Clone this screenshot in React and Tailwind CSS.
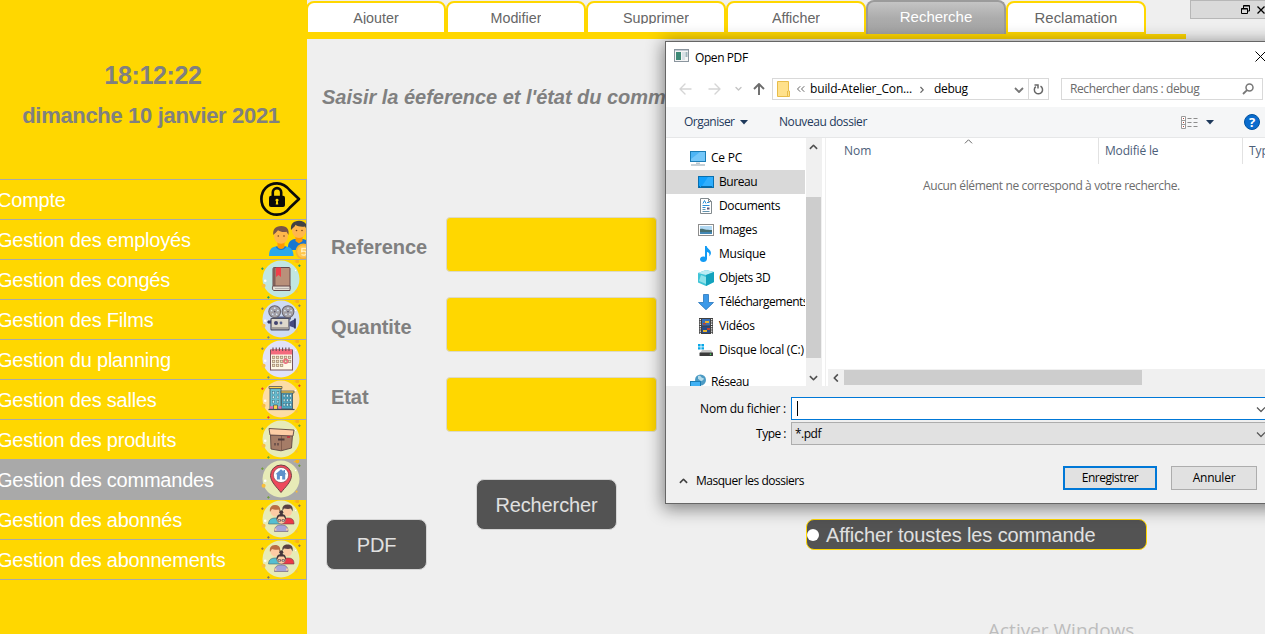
import React from "react";

const line = { fill: "none", strokeLinecap: "round", strokeLinejoin: "round" };

/* ---------- sidebar badges (46x40 canvas, disc centred on 20,20) ---------- */

function Plus({ x, y, c }) {
  return <path d={`M${x - 1.3} ${y}h2.6M${x} ${y - 1.3}v2.6`} stroke={c} strokeWidth="0.9" fill="none" />;
}

function Badge({ disc, spark = "#7c7a78", spark2, children }) {
  return (
    <svg className="-mt-px block h-10 w-[46px] shrink-0 overflow-visible" viewBox="0 0 46 40">
      <circle cx="20" cy="20" r="18.5" fill={disc} />
      <circle cx="36.3" cy="2.2" r="2" fill="#f6b21b" />
      <circle cx="2.6" cy="26.7" r="2" fill="#f9bf3b" />
      <circle cx="35.6" cy="32.6" r="1.1" fill="#f6b93b" />
      <circle cx="33.5" cy="2.7" r="0.8" fill="#f6b93b" />
      <circle cx="4.2" cy="21.7" r="1.3" fill="#fff" />
      <circle cx="34.6" cy="11.5" r="0.7" fill="#fff" />
      <Plus x={1.4} y={9.7} c={spark2 || spark} />
      <Plus x={38.4} y={6.7} c={spark} />
      <Plus x={7.4} y={38.4} c={spark2 || spark} />
      {children}
    </svg>
  );
}

function LockIcon() {
  return (
    <svg className="-mt-px block h-10 w-[46px] shrink-0 overflow-visible" viewBox="0 0 46 40">
      <path d="M16 4.3C6.800 4.300 0.400 11.400 0.400 20S6.800 35.700 16 35.700c5.500 0 9.500-2.600 13-7.200L38 20l-9-8.500C25.500 6.900 21.500 4.300 16 4.300Z" fill="none" stroke="#0a0a0a" strokeWidth="2.700" strokeLinejoin="round" />
      <path d="M11.800 18v-4.700a4.200 4.200 0 0 1 8.400 0V18" fill="none" stroke="#0a0a0a" strokeWidth="2.600" />
      <rect x="8" y="16.700" width="16" height="11.300" rx="2" fill="#0a0a0a" />
      <path d="M16 19.700a1.500 1.500 0 0 1 .8 2.800l.5 2.900h-2.600l.5-2.900A1.500 1.500 0 0 1 16 19.700Z" fill="#ffd700" />
    </svg>
  );
}

function EmployeesIcon() {
  return (
    <svg className="-mt-px block h-10 w-[46px] shrink-0" viewBox="0 0 46 40">
      <path d="M27 28c0-5 3-7.500 7-8h8c3 .5 5 2 6 5v6H28Z" fill="#1976d2" />
      <path d="M34.500 16h7v6l-3.500 2.500-3.500-2.500Z" fill="#ff9800" />
      <ellipse cx="38" cy="11" rx="7" ry="8" fill="#ffb74d" />
      <path d="M30 11c-.6-5.500 1.700-9 8-9.300 6.200.3 8.500 3.800 8 9.300l-2-3.500c-4 .5-7 0-9.500-1.800C33.800 8 32 8.500 30 11Z" fill="#424242" />
      <circle cx="35.500" cy="11.500" r=".8" fill="#784719" />
      <circle cx="41" cy="11.500" r=".8" fill="#784719" />
      <path d="M8 37c0-6 2-8.500 6.500-9.500h11c4.500 1 7 3.500 7 9.500Z" fill="#29a8ec" />
      <path d="M15.500 27.500c1.500 3.500 7.500 3.500 9 0" stroke="#1976d2" strokeWidth="1.700" fill="none" />
      <path d="M16.500 22h7v6c-1.500 2.500-5.500 2.500-7 0Z" fill="#ff9800" />
      <ellipse cx="20" cy="16.800" rx="7" ry="8" fill="#ffb74d" />
      <path d="M12.300 16c-.6-5.500 1.700-9 8-9 6.200 0 8 4 7.200 9l-2-3.200c-4 .5-6 0-8.500-1.600-1.400 2-3 2.800-4.700 4.800Z" fill="#795548" />
      <circle cx="17.300" cy="17" r=".8" fill="#784719" />
      <circle cx="23" cy="17" r=".8" fill="#784719" />
      <circle cx="42.500" cy="32.500" r="8" fill="#f9b42c" />
      <circle cx="42.500" cy="32.500" r="6.300" fill="#ffc64d" />
      <path d="M45 29.500h-4l-.3 3c3-1 5 0 4.600 2-.3 1.700-2.800 2.200-4.800 1" stroke="#fff0bd" strokeWidth="1.400" fill="none" />
    </svg>
  );
}

function BookIcon() {
  return (
    <Badge disc="#c1e6e2" spark="#21936e">
      <path d="M13 8.500h15a1 1 0 0 1 1 1V30H12V10a1.500 1.500 0 0 1 1-1.500Z" fill="#b9907a" stroke="#65484b" />
      <path d="M12 9.500c0-.6.400-1 1-1h1.500V27H12Z" fill="#80605a" />
      <path d="M12.500 27H29v4.500H13c-2 0-2-4.500-.5-4.500Z" fill="#e6dfd6" stroke="#65484b" />
      <path d="M14 29.500h14.500" stroke="#a8a29f" strokeWidth=".8" />
      <path d="M15 8.500h5v9.500l-2.500-2-2.500 2Z" fill="#ef3e4a" />
    </Badge>
  );
}

function CameraIcon() {
  return (
    <Badge disc="#cfdcf3">
      <path d="M12 17.500h18v3H12Z" fill="#59638d" />
      {[13.700, 27].map((cx) => (
        <g key={cx}>
          <circle cx={cx} cy="12.600" r="5.900" fill="#aaa6a9" stroke="#696570" strokeWidth="1.100" />
          {[0, 72, 144, 216, 288].map((a) => (
            <circle key={a} cx={cx} cy="9.300" r="1.250" fill="#dce6f5" stroke="#77717b" strokeWidth=".4" transform={`rotate(${a} ${cx} 12.600)`} />
          ))}
          <circle cx={cx} cy="12.600" r=".9" fill="#55546e" />
        </g>
      ))}
      <rect x="10" y="19.500" width="18" height="11.300" rx=".6" fill="#ded8cb" stroke="#4d4d60" strokeWidth="1.200" />
      <rect x="11" y="28" width="16.500" height="2" fill="#a7a19b" />
      <circle cx="15" cy="24" r="2" fill="#43446f" />
      <circle cx="20" cy="24" r="1.400" fill="#59638d" />
      <path d="M28.500 23l5.500-3v9l-5.500-2Z" fill="#454a80" />
      <path d="M34 19.500v10" stroke="#2f355e" strokeWidth="1.700" />
      <path d="M10 22H7v2h3" fill="#454a80" stroke="#2f355e" />
    </Badge>
  );
}

function CalendarIcon() {
  return (
    <Badge disc="#e1e2f8">
      <rect x="9.500" y="11" width="22" height="20" fill="#fff8e7" stroke="#77545c" />
      <rect x="10" y="10.300" width="21" height="5.200" fill="#f46b7d" />
      {[12, 15.200, 18.400, 21.600, 24.800, 28].map((x) => (
        <path key={x} d={`M${x} 8.500v3.500`} stroke="#674952" strokeWidth="1.100" />
      ))}
      {[17.200, 21.200, 25.200].map((y, r) =>
        [12, 16, 20, 24, 28].slice(0, r === 2 ? 3 : 5).map((x) => (
          <rect key={`${x}-${y}`} x={x - 0.500} y={y} width="2.300" height="2.300" fill="#f3e2b6" stroke="#9b806d" strokeWidth=".7" />
        ))
      )}
      <circle cx="24.700" cy="22.300" r="2.100" fill="none" stroke="#f46b7d" strokeWidth="1.200" />
    </Badge>
  );
}

function BuildingIcon() {
  return (
    <Badge disc="#fcdda5" spark="#e03a3a">
      <rect x="9" y="9" width="11" height="21" fill="#68bdd0" stroke="#455d6b" strokeWidth=".9" />
      <rect x="20.500" y="13.500" width="11" height="16.500" fill="#4ea6c1" stroke="#455d6b" strokeWidth=".9" />
      <path d="M8 7.500h13v2H8ZM20 12h13v2H20Z" fill="#ffd34d" stroke="#52555b" strokeWidth=".8" />
      {[12.500, 17, 21.500].map((y) =>
        [12.200, 16.800, 23, 26.200, 29.400].map((x) => (
          <rect key={`${x}-${y}`} x={x - 0.800} y={y + (x > 20 ? 3 : 0)} width="1.800" height="2.500" fill="#d3f4f6" stroke="#36596c" strokeWidth=".4" />
        ))
      )}
      <path d="M12.500 30v-4h4v4" fill="#ffd34d" stroke="#52555b" strokeWidth=".8" />
      <path d="M9 28.500h3M17.500 28.500h3" stroke="#ed69a3" strokeWidth="2.300" />
      <path d="M7.500 30.500h26" stroke="#464d5a" strokeWidth="1.200" />
    </Badge>
  );
}

function BoxIcon() {
  return (
    <Badge disc="#e7ebb7" spark="#6d9c33">
      <path d="M9.500 16l.5 14 10 1.800 10.500-2.800 1-13Z" fill="#a57c67" stroke="#5d4543" strokeWidth=".9" />
      <path d="M20.500 17v14.500" stroke="#795548" strokeWidth=".8" />
      <path d="M8 9.500l25 1.500-1 6-23-1Z" fill="#fdcda5" stroke="#5d4543" strokeWidth=".9" />
      <path d="M17 20.500h6.500" stroke="#4e3b3c" strokeWidth="2" />
      <path d="M26 18h3" stroke="#bd2f3c" strokeWidth="1.600" />
      <path d="M14 24v2.500M17 24v2.500" stroke="#4e3b3c" strokeWidth="1.200" />
    </Badge>
  );
}

function PinIcon() {
  return (
    <Badge disc="#e7ebb7" spark="#6d9c33">
      <path d="M20 33.500C15.500 28 9.500 22.500 9.500 16.500a10.500 10.500 0 0 1 21 0c0 6-6 11.500-10.500 17Z" fill="#ee4a5c" stroke="#704146" strokeWidth="1" />
      <circle cx="20" cy="16" r="7.600" fill="#fff" stroke="#704146" strokeWidth=".6" />
      <path d="M20 10.300l-5.600 5h1.500v5.200h3v-3.500h2.300v3.500h3v-5.200h1.500l-1.700-1.500V11h-1.500v1.200Z" fill="#5e91cb" />
    </Badge>
  );
}

function PeopleIcon() {
  return (
    <Badge disc="#e7ebb7" spark="#8b6e50">
      <path d="M7.500 25c0-4.500 3-6 7-6s6 1.500 6 6Z" fill="#55bfd1" stroke="#53666c" strokeWidth=".6" />
      <path d="M20 25c0-4.500 3-6 7-6s6 1.500 6 6Z" fill="#eb3947" stroke="#704146" strokeWidth=".6" />
      <circle cx="14" cy="13" r="4.400" fill="#fdcba4" />
      <path d="M9 13c-.8-4 1-7 5-7s6 2.500 5 7l-1.500-2.500c-2.500.5-5 0-6.500-.5Z" fill="#b96e45" />
      <circle cx="26.500" cy="13" r="4.400" fill="#fdcba4" />
      <path d="M21.500 12c-.8-4 1-6.500 5-6.500s6 2.500 5 7l-1.500-3-3 .500-4-.5Z" fill="#584142" />
      <circle cx="20.300" cy="13.200" r="2" fill="#47343a" />
      <path d="M13.500 32.500c0-5 2.500-6.500 6.800-6.500s6.700 1.500 6.700 6.500Z" fill="#a7a4d8" stroke="#6b5b72" strokeWidth=".6" />
      <circle cx="20.300" cy="20.500" r="4.400" fill="#fdcba4" stroke="#705357" strokeWidth=".4" />
      <path d="M15.700 21c-.6-4 1.300-6 4.600-6s5.200 2 4.600 6l-2-3.500h-5Z" fill="#47343a" />
      <path d="M17 20.700h2.600v1.500H17ZM21 20.700h2.600v1.500H21Z" fill="#fff" stroke="#47343a" strokeWidth=".7" />
      <path d="M14.500 31.500v-2M26 31.500v-2" stroke="#fdcba4" strokeWidth="1.800" />
    </Badge>
  );
}

const MENU = [
  ["Compte", LockIcon],
  ["Gestion des employés", EmployeesIcon],
  ["Gestion des congés", BookIcon],
  ["Gestion des Films", CameraIcon],
  ["Gestion du planning", CalendarIcon],
  ["Gestion des salles", BuildingIcon],
  ["Gestion des produits", BoxIcon],
  ["Gestion des commandes", PinIcon],
  ["Gestion des abonnés", PeopleIcon],
  ["Gestion des abonnements", PeopleIcon],
];

function Sidebar() {
  return (
    <aside className="flex w-[307px] shrink-0 flex-col bg-[#ffd700] text-[#808080]">
      <div className="flex h-[179px] flex-col items-center pt-[60px] font-bold">
        <div className="h-[30px] pr-px text-[25px] leading-[30px] tracking-[-0.350px]">18:12:22</div>
        <div className="mt-[11px] h-[30px] pr-[5px] text-[22px] leading-[30px] tracking-[-0.330px]">dimanche 10 janvier 2021</div>
      </div>
      <nav className="border-r border-b border-[#a9a9a9]">
        {MENU.map(([label, Icon]) => (
          <div
            key={label}
            className={`flex h-10 items-center justify-between overflow-hidden border-t border-[#a9a9a9] ${label === "Gestion des commandes" ? "bg-[#a9a9a9]" : ""}`}
          >
            <span className="-ml-[3px] text-[20px] leading-6 tracking-[-0.210px] whitespace-nowrap text-white">{label}</span>
            <span className="-mr-px shrink-0"><Icon /></span>
          </div>
        ))}
      </nav>
    </aside>
  );
}

/* ---------- main area ---------- */

const TABS = ["Ajouter", "Modifier", "Supprimer", "Afficher", "Recherche", "Reclamation"];

function Tabs() {
  return (
    <div className="flex h-[39px] flex-col">
      <div className="-ml-px flex h-[34px] items-end">
        {TABS.map((t) =>
          t === "Recherche" ? (
            <div key={t} className="flex h-[34px] w-[140px] justify-center rounded-t-lg border-2 border-b-0 border-[#9b9b9b] bg-linear-to-b from-[#c4c4c4] via-[#acacac] to-[#a3a3a3] pt-[5px] text-[15px] leading-5 text-white">
              {t}
            </div>
          ) : (
            <div key={t} className="flex h-[33px] w-[140px] justify-center rounded-t-lg border-2 border-[#ffd700] bg-white pt-[5px] text-[14.300px] leading-5 text-[#666]">
              <span className={t === "Reclamation" ? "text-[14.900px]" : "h-[16px] overflow-hidden"}>{t}</span>
            </div>
          )
        )}
      </div>
      <div className="h-[5px] w-[879px] bg-[#ffd700]" />
    </div>
  );
}

const FIELDS = [
  ["Reference", "pt-[18px]"],
  ["Quantite", "pt-[18px]"],
  ["Etat", "pt-[8px]"],
];

function Main() {
  return (
    <main className="relative flex flex-1 flex-col overflow-hidden bg-[#efefef]">
      <div className="flex items-start justify-between">
        <Tabs />
        <div className="flex h-[19px] w-[75px] items-center gap-[7px] border border-r-0 border-[#b7b7b7] bg-[#dadada] pl-[50px]">
          <svg className="h-[9px] w-[9px] shrink-0" viewBox="0 0 9 9">
            <path d="M2.500 3V.5h6V6H6.500M2.500 1h6M.5 3.500h6v5h-6ZM.5 4h6" stroke="#000" fill="none" />
          </svg>
          <svg className="h-[8px] w-[8px] shrink-0" viewBox="0 0 8 8">
            <path d="M.5.5l7 7M7.500.5l-7 7" stroke="#000" strokeWidth="1.300" />
          </svg>
        </div>
      </div>
      <h1 className="mt-[45px] ml-[15px] h-[26px] text-[20px] leading-[26px] font-bold tracking-[-0.030px] whitespace-nowrap text-[#808080] italic">
        Saisir la éeference et l'état du comm
      </h1>
      <div className="mt-[107px] ml-[24px] flex flex-col gap-[25px]">
        {FIELDS.map(([label, pad]) => (
          <div key={label} className="flex h-[55px]">
            <label className={`w-[115px] text-[20px] leading-6 font-bold tracking-[-0.080px] text-[#808080] ${pad}`}>{label}</label>
            <div className="h-[55px] w-[211px] rounded-[4px] border border-[#dcd9c8] bg-[#ffd700]" />
          </div>
        ))}
      </div>
      <div className="mt-[47px] ml-[19px] flex items-start text-[20px] tracking-[-0.120px] text-[#e0e0e0]">
        <button className="mt-10 h-[51px] w-[101px] rounded-lg border border-[#d5d5d5] bg-[#535353]">PDF</button>
        <button className="ml-[49px] h-[51px] w-[141px] rounded-lg border border-[#d5d5d5] bg-[#535353]">Rechercher</button>
        <label className="mt-10 ml-[189px] flex h-[31px] w-[341px] items-center gap-[7px] rounded-lg border border-[#ffd700] bg-[#535353] whitespace-nowrap">
          <span className="h-3 w-3 rounded-full bg-white" />
          <span className="text-[20px]">Afficher toustes les commande</span>
        </label>
      </div>
      <div className="mt-[46px] ml-[681px] h-6 font-['Open_Sans',sans-serif] text-[19px] leading-7 whitespace-nowrap text-[#bdbdbd]">
        Activer Windows
      </div>
    </main>
  );
}

/* ---------- file dialog ---------- */

const PcIcon = () => (
  <svg className="h-4 w-4" viewBox="0 0 16 16">
    <rect x=".5" y="1.500" width="15" height="10" fill="#4db5f5" stroke="#1b7db5" />
    <path d="M1 9L10 2h5v9H1Z" fill="#8fd4fb" opacity=".6" />
    <path d="M6 12.500h4v1.500H6Z" fill="#b9c6ce" />
    <path d="M1 15h14" stroke="#8fa2ae" />
  </svg>
);
const DesktopIcon = () => (
  <svg className="h-4 w-4" viewBox="0 0 16 16">
    <rect x=".5" y="2.500" width="15" height="11" fill="#12a0fb" stroke="#096fae" />
    <path d="M10 3h5v9H4Z" fill="#45b8ff" opacity=".6" />
    <path d="M1 12.800h14" stroke="#075487" strokeDasharray="1 1 11 1" />
  </svg>
);
const DocIcon = () => (
  <svg className="h-4 w-4" viewBox="0 0 16 16">
    <path d="M2.500.5h8l3 3v12h-11Z" fill="#fff" stroke="#828a8e" />
    <path d="M10.500.5v3h3" fill="none" stroke="#828a8e" />
    <path d="M5 5.500l1.500-3L8 5.500M9 4.500h2.500M4.500 7.500h7M4.500 9.500h3" fill="none" stroke="#2b8fd6" />
    <path d="M9 9.500h2.500v2H9Z" fill="#557" />
    <path d="M4.500 11.500h3M4.500 13.500h7" stroke="#6293ae" />
  </svg>
);
const ImageIcon = () => (
  <svg className="h-4 w-4" viewBox="0 0 16 16">
    <rect x=".5" y="2.500" width="15" height="11" fill="#fff" stroke="#8d8d8d" />
    <rect x="2" y="4" width="12" height="8" fill="#b2d9f3" />
    <path d="M2 7c3-1 4 1 12 1v2H2Z" fill="#486f72" />
    <path d="M2 10h12v2H2Z" fill="#4387b4" />
  </svg>
);
const MusicIcon = () => (
  <svg className="h-4 w-4" viewBox="0 0 16 16">
    <path d="M7 0h1.700c.2 3 4.700 3.500 4.200 7.500-.2 1.200-.9 2.300-1.700 2.800.8-3-.7-4-2.200-4.300v6.700c0 2-1.600 3.300-3.600 3.300S2 14.800 2 13.300s1.500-2.700 3.200-2.700c.7 0 1.300.1 1.800.3Z" fill="#129bf4" />
  </svg>
);
const CubeIcon = () => (
  <svg className="h-4 w-4" viewBox="0 0 16 16">
    <path d="M0 3l8-3 8 2v10l-8 4-8-3.500Z" fill="#3fc4d7" />
    <path d="M0 3l8-3 8 2-8 3Z" fill="#bcecf4" />
    <path d="M8 5l8-3v10l-8 4Z" fill="#13a2bd" />
    <path d="M3 5l5 2v7L1 11Z" fill="#8de2ea" />
  </svg>
);
const DownloadIcon = () => (
  <svg className="h-4 w-4" viewBox="0 0 16 16">
    <path d="M5.500.5h5v8h5L8 15.700.5 8.500h5Z" fill="#3c99e8" stroke="#2876bd" strokeWidth=".8" />
  </svg>
);
const VideoIcon = () => (
  <svg className="h-4 w-4" viewBox="0 0 16 16">
    <rect x="1" y="0" width="14" height="16" fill="#404040" />
    <path d="M2.300 1v15M13.700 1v15" stroke="#fff" strokeWidth="1.200" strokeDasharray="1.300 1" />
    <rect x="4" y="1" width="8" height="6.500" fill="#3970bb" />
    <rect x="4" y="8.500" width="8" height="6.500" fill="#284b8a" />
    <path d="M7 3h4v2H7ZM5 12h4v2H5Z" fill="#e7b52d" />
    <path d="M5 5h3v1.500H5ZM9 10h3v2H9Z" fill="#be4330" />
  </svg>
);
const DiskIcon = () => (
  <svg className="h-4 w-4" viewBox="0 0 16 16">
    <path d="M0 2h2.600v2.400H0ZM3.400 2H6v2.400H3.400ZM0 5.200h2.600v2.400H0ZM3.400 5.200H6v2.400H3.400Z" fill="#08a8e8" />
    <path d="M4 8h9l2 3H2Z" fill="#c8c8c8" />
    <rect x="1.500" y="10.500" width="13.500" height="3.500" rx=".5" fill="#3c3c3c" />
    <circle cx="12.500" cy="12.300" r=".8" fill="#43e260" />
  </svg>
);
const NetworkIcon = () => (
  <svg className="h-4 w-4" viewBox="0 0 16 16">
    <circle cx="10.500" cy="6" r="5.500" fill="#4d9bc4" />
    <path d="M8 2c3-1.500 3 2 5 2s0 3-1.500 3S9 5 8 5Z" fill="#b5dbea" />
    <rect x=".5" y="7.500" width="10" height="7" fill="#40b1f4" stroke="#1b7db5" />
  </svg>
);

const TREE = [
  ["Bureau", DesktopIcon, "tracking-[-0.450px]"],
  ["Documents", DocIcon, "tracking-[-0.350px]"],
  ["Images", ImageIcon, "tracking-[-0.350px]"],
  ["Musique", MusicIcon, "tracking-[-0.250px]"],
  ["Objets 3D", CubeIcon, "tracking-[-0.430px]"],
  ["Téléchargements", DownloadIcon, "tracking-[-0.480px]"],
  ["Vidéos", VideoIcon, "tracking-[-0.250px]"],
  ["Disque local (C:)", DiskIcon, "tracking-[-0.230px]"],
];

const PATHS = {
  up: "M1 6l4-4 4 4",
  down: "M1 3l4 4 4-4",
  left: "M6.500 1l-4 4 4 4",
  right: "M3.500 1l4 4-4 4",
};

function Chevron({ dir, className = "h-[9px] w-[9px]", width = 1.800 }) {
  return (
    <svg className={`shrink-0 ${className}`} viewBox="0 0 10 9">
      <path d={PATHS[dir]} {...line} strokeLinecap="butt" stroke="currentColor" strokeWidth={width} />
    </svg>
  );
}

function AddressRow() {
  return (
    <div className="flex h-[22px] items-center pl-[13px]">
      <svg className="h-[22px] w-[93px] shrink-0" viewBox="0 0 93 22">
        <path d="M12 11H1M6 6l-5 5 5 5M30 11h11M36 6l5 5-5 5" {...line} stroke="#d5d5d5" strokeWidth="1.400" />
        <path d="M57 9.500l2.500 2.500L62 9.500" {...line} stroke="#c4c4c4" strokeWidth="1.400" />
        <path d="M80 17V6M75 11l5-5 5 5" {...line} stroke="#6c6c6c" strokeWidth="1.900" strokeLinecap="butt" />
      </svg>
      <div className="flex h-[22px] w-[257px] items-center border border-[#d9d9d9]">
        <svg className="ml-1 h-4 w-[13px] shrink-0" viewBox="0 0 13 16">
          <path d="M.5.5h11v9.500h1v5.500H.5Z" fill="#ffe18b" stroke="#e8bd4a" />
          <path d="M10.500 10v5.500" stroke="#e8bd4a" />
        </svg>
        <svg className="ml-[6px] h-2 w-[9px] shrink-0" viewBox="0 0 9 8">
          <path d="M4 1.500L1.500 4 4 6.500M8 1.500L5.500 4 8 6.500" {...line} stroke="#666" />
        </svg>
        <span className="ml-[5px] w-[104px] shrink-0 tracking-[-0.150px]">build-Atelier_Con...</span>
        <Chevron dir="right" className="ml-[4px] h-[7px] w-[7px] text-[#666]" />
        <span className="ml-[9px] flex-1 tracking-[-0.300px]">debug</span>
        <Chevron dir="down" className="mr-[4px] h-[9px] w-[10px] text-[#777]" />
      </div>
      <div className="-ml-px flex h-[22px] w-[21px] items-center justify-center border border-[#d9d9d9]">
        <svg className="h-[11px] w-[11px]" viewBox="0 0 11 11">
          <path d="M7.500 2.200A4.100 4.100 0 1 1 2.800 2.600M1.500 1h3.500v3.400" fill="none" stroke="#666" strokeWidth="1.500" />
        </svg>
      </div>
      <div className="ml-[12px] flex h-[22px] w-[202px] shrink-0 items-center justify-between border border-[#d9d9d9] pr-[8px] pl-2 text-[#6b6b6b]">
        <span className="tracking-[-0.400px]">Rechercher dans : debug</span>
        <svg className="h-[12px] w-[12px]" viewBox="0 0 12 12">
          <circle cx="7.500" cy="4.500" r="3.500" fill="none" stroke="#777" strokeWidth="1.500" />
          <path d="M5 7.200L1 11" stroke="#777" strokeWidth="1.800" />
        </svg>
      </div>
    </div>
  );
}

function Toolbar() {
  return (
    <div className="mt-[7px] flex h-[31px] shrink-0 items-center border-b border-[#e6e7e8] bg-[#f5f6f7] pl-[18px] text-[#1e395b]">
      <span className="w-[56px] tracking-[-0.520px]">Organiser</span>
      <svg className="h-[5px] w-[8px]" viewBox="0 0 8 5"><path d="M0 0h8L4 4.500Z" fill="#1e395b" /></svg>
      <span className="ml-[31px] w-[402px] tracking-[-0.420px]">Nouveau dossier</span>
      <svg className="h-[13px] w-[17px]" viewBox="0 0 17 13">
        <path d="M.5.5h4v12h-4ZM.5 4.500h4M.5 8.500h4" fill="#fff" stroke="#9a9a9a" />
        <path d="M2 2.500h1M2 6.500h1M2 10.500h1" stroke="#b04a3b" />
        <path d="M6.500 2.500h4M12.500 2.500h4M6.500 6.500h4M12.500 6.500h4M6.500 10.500h4M12.500 10.500h4" stroke="#8d8d8d" />
      </svg>
      <svg className="ml-[8px] h-[5px] w-[8px]" viewBox="0 0 8 5"><path d="M0 0h8L4 4.500Z" fill="#1e395b" /></svg>
      <span className="ml-[30px] flex h-4 w-4 items-center justify-center rounded-full border border-[#0053a0] bg-[#0a6cce] text-[13px] leading-none font-bold text-white">?</span>
    </div>
  );
}

function Tree() {
  return (
    <div className="flex w-[139px] shrink-0 flex-col overflow-hidden pt-[8px]">
      <div className="flex h-6 shrink-0 items-center gap-[5px] pl-6"><PcIcon /><span className="tracking-[-0.200px]">Ce PC</span></div>
      {TREE.map(([label, Icon, tracking]) => (
        <div key={label} className={`flex h-6 w-[139px] shrink-0 items-center gap-[5px] overflow-hidden pl-8 ${label === "Bureau" ? "bg-[#d9d9d9]" : ""}`}>
          <span className="shrink-0"><Icon /></span>
          <span className={`whitespace-nowrap ${tracking}`}>{label}</span>
        </div>
      ))}
      <div className="mt-2 flex h-6 shrink-0 items-center gap-[5px] pl-6"><NetworkIcon /><span className="tracking-[-0.450px]">Réseau</span></div>
    </div>
  );
}

function FileList() {
  return (
    <div className="ml-[3px] flex flex-1 flex-col border-l border-[#efefef]">
      <div className="flex h-[26px] shrink-0 text-[#4c607a]">
        <div className="flex w-[273px] justify-between border-r border-[#e2e2e2] pl-[18px]">
          <span className="pt-[5px]">Nom</span>
          <Chevron dir="up" width={1} className="mr-[125px] h-[8px] w-[9px] text-[#555]" />
        </div>
        <div className="w-[144px] border-r border-[#e2e2e2] pt-[5px] pl-[6px] tracking-[-0.170px]">Modifié le</div>
        <div className="pt-[5px] pl-[6px]">Type</div>
      </div>
      <div className="flex h-[205px] pt-[14px] pl-[97px] tracking-[-0.370px] whitespace-nowrap text-[#6d6d6d]">
        Aucun élément ne correspond à votre recherche.
      </div>
      <div className="ml-[2px] flex h-[17px] items-start bg-[#f0f0f0]">
        <span className="flex w-[16px] justify-center pt-[4px] text-[#505050]"><Chevron dir="left" /></span>
        <span className="mt-px h-[15px] w-[298px] bg-[#cdcdcd]" />
        <span className="ml-[123px] pt-[4px] text-[#505050]"><Chevron dir="right" /></span>
      </div>
    </div>
  );
}

function Dialog() {
  return (
    <div className="absolute top-[41px] left-[665px] flex h-[463px] w-[620px] flex-col border border-[#666] bg-white font-['Open_Sans',sans-serif] text-[12px] leading-4 text-black shadow-[0_3px_16px_2px_rgba(0,0,0,0.450)]">
      <div className="flex h-[36px] shrink-0 items-start pt-[7px] pl-[8px]">
        <svg className="h-[13px] w-[15px]" viewBox="0 0 15 13">
          <rect x=".5" y=".5" width="14" height="12" fill="#f5f5f5" stroke="#8b959e" />
          <path d="M1 1.500h13" stroke="#c2cbd3" />
          <rect x="2" y="3" width="5" height="8" fill="#3d8976" />
          <rect x="8" y="3" width="3" height="8" fill="#d9e1e6" />
          <rect x="11.500" y="3" width="2" height="5" fill="#9fb6bd" />
        </svg>
        <span className="mt-px ml-[6px] w-[560px] tracking-[-0.420px]">Open PDF</span>
        <svg className="mt-[2px] h-[11px] w-[11px] shrink-0" viewBox="0 0 11 11">
          <path d="M.5.5l10 10M10.500.5l-10 10" stroke="#000" />
        </svg>
      </div>
      <AddressRow />
      <Toolbar />
      <div className="flex h-[248px] shrink-0">
        <Tree />
        <div className="ml-px flex w-[16px] shrink-0 flex-col bg-[#f0f0f0] pt-[5px] text-[#505050]">
          <Chevron dir="up" className="ml-[3px] h-[9px] w-[9px]" />
          <div className="mt-[45px] h-[161px] w-[15px] bg-[#cdcdcd]" />
          <Chevron dir="down" className="mt-[15px] ml-[3px] h-[9px] w-[9px]" />
        </div>
        <FileList />
      </div>
      <div className="flex flex-1 flex-col bg-[#f0f0f0]">
        <div className="mt-[11px] flex h-[23px] items-center">
          <span className="w-[120px] text-right tracking-[-0.220px]">Nom du fichier :</span>
          <div className="ml-[5px] flex h-[23px] w-[479px] items-center border border-[#0078d7] bg-white pl-[5px]">
            <span className="h-[15px] w-px bg-black" />
            <Chevron dir="down" width={1.200} className="ml-[458px] h-[10px] w-[10px] text-[#555]" />
          </div>
        </div>
        <div className="mt-[2px] flex h-[23px] items-center">
          <span className="w-[120px] text-right tracking-[-0.500px]">Type :</span>
          <div className="ml-[5px] flex h-[23px] w-[479px] items-center border border-[#adadad] bg-[#e1e1e1] pl-[3px]">
            <span className="w-[461px] tracking-[-0.500px]">*.pdf</span>
            <Chevron dir="down" width={1.200} className="h-[10px] w-[10px] text-[#555]" />
          </div>
        </div>
        <div className="mt-[21px] flex h-[24px] items-center pl-[13px]">
          <Chevron dir="up" className="mt-[6px] h-[9px] w-[9px] text-[#404040]" />
          <span className="mt-[6px] ml-2 w-[367px] tracking-[-0.480px]">Masquer les dossiers</span>
          <button className="h-6 w-[94px] border-2 border-[#0078d7] bg-[#e1e1e1] tracking-[-0.470px]">Enregistrer</button>
          <button className="ml-[14px] h-6 w-[86px] border border-[#adadad] bg-[#e1e1e1] tracking-[-0.250px]">Annuler</button>
        </div>
      </div>
    </div>
  );
}

export default function App() {
  return (
    <div className="relative flex h-[634px] w-[1265px] overflow-hidden bg-[#efefef] font-['Liberation_Sans',Arial,sans-serif]">
      <Sidebar />
      <Main />
      <Dialog />
    </div>
  );
}
